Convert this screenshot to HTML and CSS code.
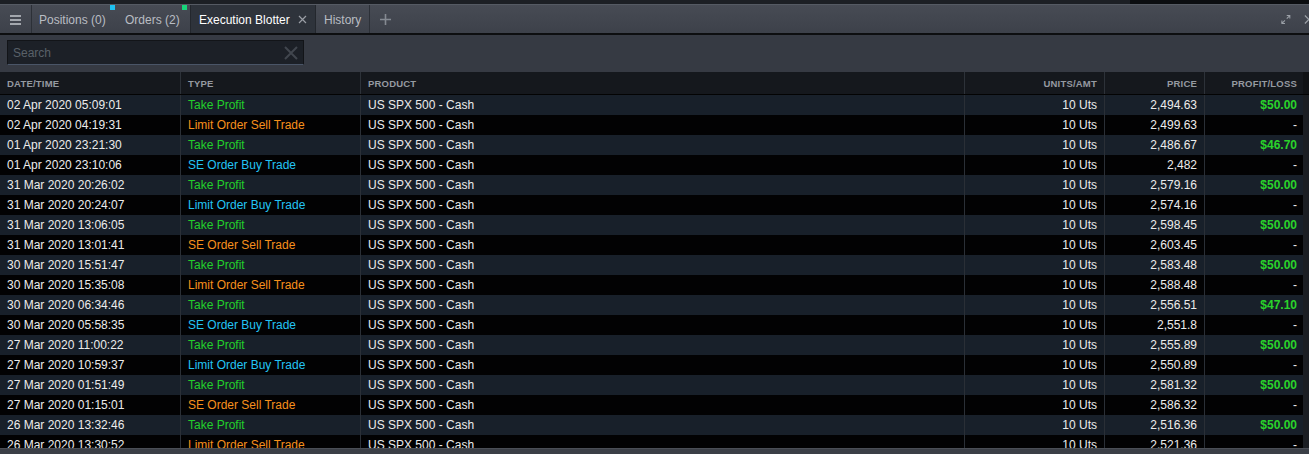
FILE: index.html
```html
<!DOCTYPE html>
<html>
<head>
<meta charset="utf-8">
<link rel="stylesheet" href="styles.css">
</head>
<body>
<div class="app">
  <div class="topstrip"><div class="ts-left"></div><div class="ts-right"></div></div>
  <div class="tabbar">
    <div class="menu">
      <svg width="11" height="10" viewBox="0 0 11 10"><rect x="0" y="0" width="11" height="2" fill="#a3a7ad"/><rect x="0" y="4" width="11" height="2" fill="#a3a7ad"/><rect x="0" y="8" width="11" height="2" fill="#a3a7ad"/></svg>
    </div>
    <div class="tab tab-positions">Positions (0)<span class="dot dot-cyan"></span></div>
    <div class="tab tab-orders">Orders (2)<span class="dot dot-green"></span></div>
    <div class="tab tab-active">Execution Blotter
      <svg class="tab-close" width="9" height="9" viewBox="0 0 9 9"><path d="M1 1L8 8M8 1L1 8" stroke="#9a9ea5" stroke-width="1.2"/></svg>
    </div>
    <div class="tab tab-history">History</div>
    <div class="addtab">
      <svg width="11" height="11" viewBox="0 0 11 11"><path d="M5.5 0V11M0 5.5H11" stroke="#858a92" stroke-width="1.6"/></svg>
    </div>
    <div class="spacer"></div>
    <div class="winicons">
      <svg width="11" height="11" viewBox="0 0 11 11"><path d="M6.5 1H10V4.5M10 1L6.5 4.5M4.5 10H1V6.5M1 10L4.5 6.5" stroke="#9ba0a7" stroke-width="1.2" fill="none"/></svg>
      <svg class="chev" width="6" height="11" viewBox="0 0 6 11"><path d="M1 1L5.5 5.5L1 10" stroke="#9ba0a7" stroke-width="1.3" fill="none"/></svg>
    </div>
  </div>
  <div class="toolbar">
    <div class="search">
      <span class="placeholder">Search</span>
      <svg width="14" height="14" viewBox="0 0 14 14"><path d="M1 1L13 13M13 1L1 13" stroke="#41464e" stroke-width="2"/></svg>
    </div>
  </div>
  <div class="grid-wrap">
    <div class="grid-head">
      <div class="row head">
        <div class="c">DATE/TIME</div>
        <div class="c">TYPE</div>
        <div class="c">PRODUCT</div>
        <div class="c r">UNITS/AMT</div>
        <div class="c r">PRICE</div>
        <div class="c r">PROFIT/LOSS</div>
      </div>
      <div class="track"></div>
    </div>
    <div class="grid-body">
      <div class="rows">
        <div class="row odd"><div class="c">02 Apr 2020 05:09:01</div><div class="c green">Take Profit</div><div class="c">US SPX 500 - Cash</div><div class="c r">10 Uts</div><div class="c r">2,494.63</div><div class="c r pnl">$50.00</div></div>
        <div class="row"><div class="c">02 Apr 2020 04:19:31</div><div class="c orange">Limit Order Sell Trade</div><div class="c">US SPX 500 - Cash</div><div class="c r">10 Uts</div><div class="c r">2,499.63</div><div class="c r">-</div></div>
        <div class="row odd"><div class="c">01 Apr 2020 23:21:30</div><div class="c green">Take Profit</div><div class="c">US SPX 500 - Cash</div><div class="c r">10 Uts</div><div class="c r">2,486.67</div><div class="c r pnl">$46.70</div></div>
        <div class="row"><div class="c">01 Apr 2020 23:10:06</div><div class="c cyan">SE Order Buy Trade</div><div class="c">US SPX 500 - Cash</div><div class="c r">10 Uts</div><div class="c r">2,482</div><div class="c r">-</div></div>
        <div class="row odd"><div class="c">31 Mar 2020 20:26:02</div><div class="c green">Take Profit</div><div class="c">US SPX 500 - Cash</div><div class="c r">10 Uts</div><div class="c r">2,579.16</div><div class="c r pnl">$50.00</div></div>
        <div class="row"><div class="c">31 Mar 2020 20:24:07</div><div class="c cyan">Limit Order Buy Trade</div><div class="c">US SPX 500 - Cash</div><div class="c r">10 Uts</div><div class="c r">2,574.16</div><div class="c r">-</div></div>
        <div class="row odd"><div class="c">31 Mar 2020 13:06:05</div><div class="c green">Take Profit</div><div class="c">US SPX 500 - Cash</div><div class="c r">10 Uts</div><div class="c r">2,598.45</div><div class="c r pnl">$50.00</div></div>
        <div class="row"><div class="c">31 Mar 2020 13:01:41</div><div class="c orange">SE Order Sell Trade</div><div class="c">US SPX 500 - Cash</div><div class="c r">10 Uts</div><div class="c r">2,603.45</div><div class="c r">-</div></div>
        <div class="row odd"><div class="c">30 Mar 2020 15:51:47</div><div class="c green">Take Profit</div><div class="c">US SPX 500 - Cash</div><div class="c r">10 Uts</div><div class="c r">2,583.48</div><div class="c r pnl">$50.00</div></div>
        <div class="row"><div class="c">30 Mar 2020 15:35:08</div><div class="c orange">Limit Order Sell Trade</div><div class="c">US SPX 500 - Cash</div><div class="c r">10 Uts</div><div class="c r">2,588.48</div><div class="c r">-</div></div>
        <div class="row odd"><div class="c">30 Mar 2020 06:34:46</div><div class="c green">Take Profit</div><div class="c">US SPX 500 - Cash</div><div class="c r">10 Uts</div><div class="c r">2,556.51</div><div class="c r pnl">$47.10</div></div>
        <div class="row"><div class="c">30 Mar 2020 05:58:35</div><div class="c cyan">SE Order Buy Trade</div><div class="c">US SPX 500 - Cash</div><div class="c r">10 Uts</div><div class="c r">2,551.8</div><div class="c r">-</div></div>
        <div class="row odd"><div class="c">27 Mar 2020 11:00:22</div><div class="c green">Take Profit</div><div class="c">US SPX 500 - Cash</div><div class="c r">10 Uts</div><div class="c r">2,555.89</div><div class="c r pnl">$50.00</div></div>
        <div class="row"><div class="c">27 Mar 2020 10:59:37</div><div class="c cyan">Limit Order Buy Trade</div><div class="c">US SPX 500 - Cash</div><div class="c r">10 Uts</div><div class="c r">2,550.89</div><div class="c r">-</div></div>
        <div class="row odd"><div class="c">27 Mar 2020 01:51:49</div><div class="c green">Take Profit</div><div class="c">US SPX 500 - Cash</div><div class="c r">10 Uts</div><div class="c r">2,581.32</div><div class="c r pnl">$50.00</div></div>
        <div class="row"><div class="c">27 Mar 2020 01:15:01</div><div class="c orange">SE Order Sell Trade</div><div class="c">US SPX 500 - Cash</div><div class="c r">10 Uts</div><div class="c r">2,586.32</div><div class="c r">-</div></div>
        <div class="row odd"><div class="c">26 Mar 2020 13:32:46</div><div class="c green">Take Profit</div><div class="c">US SPX 500 - Cash</div><div class="c r">10 Uts</div><div class="c r">2,516.36</div><div class="c r pnl">$50.00</div></div>
        <div class="row"><div class="c">26 Mar 2020 13:30:52</div><div class="c orange">Limit Order Sell Trade</div><div class="c">US SPX 500 - Cash</div><div class="c r">10 Uts</div><div class="c r">2,521.36</div><div class="c r">-</div></div>
      </div>
      <div class="track"></div>
    </div>
  </div>
  <div class="bottombar"></div>
</div>
</body>
</html>
```

FILE: styles.css
```css
* { box-sizing: border-box; }
html, body { margin: 0; padding: 0; }
body {
  background: #1a1d22;
  font-family: "Liberation Sans", Arial, sans-serif;
  font-size: 12px;
  color: #ececec;
  overflow: hidden;
}
.app {
  width: 1309px;
  height: 454px;
  display: flex;
  flex-direction: column;
}
.topstrip {
  height: 4px;
  display: flex;
  flex: none;
}
.ts-left { width: 1130px; background: #1c1f24; }
.ts-right { flex: 1; background: #0b0d10; }

.tabbar {
  height: 31px;
  flex: none;
  display: flex;
  align-items: stretch;
  background: linear-gradient(#474b54, #3d414a);
  border-top: 1px solid #555a63;
  border-bottom: 2px solid #0d0e10;
}
.menu {
  width: 32px;
  display: flex;
  align-items: center;
  padding-left: 10px;
  padding-top: 1px;
  border-right: 1px solid #2c3037;
}
.tab {
  position: relative;
  display: flex;
  align-items: center;
  padding-top: 1px;
  color: #b9bdc3;
  white-space: nowrap;
}
.tab-positions { width: 86px; padding-left: 7px; }
.tab-orders { width: 72px; padding-left: 7px; }
.tab-active {
  width: 126px;
  padding-left: 8px;
  background: #2e333b;
  color: #ffffff;
  border-left: 1px solid #23272d;
  border-right: 1px solid #23272d;
}
.tab-close { position: absolute; left: 107px; top: 10px; }
.tab-history {
  width: 54px;
  padding-left: 8px;
  border-right: 1px solid #2c3037;
}
.dot {
  position: absolute;
  top: 0px;
  width: 5px;
  height: 5px;
}
.tab-positions .dot { left: 78px; }
.tab-orders .dot { left: 64px; }
.dot-cyan { background: #1fc2f2; }
.dot-green { background: #17d67a; }
.addtab {
  width: 30px;
  display: flex;
  align-items: center;
  padding-left: 10px;
}
.spacer { flex: 1; }
.winicons {
  display: flex;
  align-items: center;
  gap: 13px;
  width: 28px;
  overflow: hidden;
}

.toolbar {
  height: 37px;
  flex: none;
  background: #363a43;
  padding: 5px 7px 7px;
}
.search {
  width: 297px;
  height: 25px;
  background: #1c2027;
  border: 1px solid #121418;
  border-bottom-color: #4a5567;
  display: flex;
  align-items: center;
  justify-content: space-between;
  padding: 0 5px 0 5px;
}
.placeholder { color: #596069; font-size: 12px; }

.grid-wrap {
  flex: 1;
  display: flex;
  flex-direction: column;
  min-height: 0;
}
.grid-head {
  display: flex;
  flex: none;
  height: 23px;
  background: #15181d;
  border-bottom: 1px solid #030303;
}
.grid-body {
  flex: 1;
  display: flex;
  min-height: 0;
  overflow: hidden;
}
.rows { width: 1303px; flex: none; }
.track { flex: 1; background: #1b1e23; }
.grid-head .track { background: #101215; }

.row {
  display: grid;
  grid-template-columns: 180px 180px 604px 140px 100px 99px;
  height: 20px;
  line-height: 20px;
  background: #020203;
}
.row.odd { background: #18202a; }
.row.head {
  width: 1303px;
  height: 22px;
  line-height: 23px;
  background: #15181d;
  color: #959aa1;
  font-size: 9.5px;
  font-weight: bold;
  letter-spacing: 0.2px;
}
.c {
  padding: 0 7px;
  white-space: nowrap;
  overflow: hidden;
  border-left: 1px solid #2a2f36;
}
.c:first-child { border-left: none; }
.head .c { border-left-color: #2d3239; }
.c.r { text-align: right; }
.row .c:last-child { padding-right: 6px; }
.green { color: #22d02a; }
.orange { color: #f7901c; }
.cyan { color: #23c4f4; }
.pnl { color: #2ad32a; font-weight: bold; }

.bottombar {
  height: 6px;
  flex: none;
  background: #3b3f47;
  border-top: 1px solid #4a4e56;
}
```
